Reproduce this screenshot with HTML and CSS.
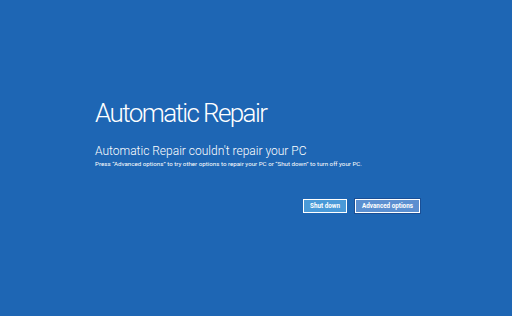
FILE: index.html
```html
<!DOCTYPE html>
<html lang="en">
<head>
    <meta charset="UTF-8">
    <title>Automatic Repair</title>
    <link rel="stylesheet" href="styles.css">
</head>
<body>
    <div class="screen">
        <h1>Automatic Repair</h1>
        <h2>Automatic Repair couldn't repair your PC</h2>
        <p class="hint">Press “Advanced options” to try other options to repair your PC or “Shut down” to turn off your PC.</p>
        <div class="actions">
            <button class="btn btn-shutdown">Shut down</button>
            <button class="btn btn-advanced">Advanced options</button>
        </div>
    </div>
</body>
</html>
```

FILE: styles.css
```css
* {
    box-sizing: border-box;
    margin: 0;
    padding: 0;
}

body {
    width: 512px;
    height: 316px;
    background-color: #1e66b4;
    color: #ffffff;
    font-family: Roboto, 'Open Sans', sans-serif;
    overflow: hidden;
}

.screen {
    padding: 96px 0 0 95px;
    width: 420px;
}

h1 {
    font-size: 26px;
    font-weight: 300;
    line-height: 34px;
    letter-spacing: -1.6px;
}

h2 {
    margin-top: 13px;
    font-size: 12px;
    font-weight: 300;
    line-height: 16px;
}

.hint {
    margin-top: 1px;
    font-size: 6.2px;
    line-height: 8px;
}

.actions {
    display: flex;
    justify-content: flex-end;
    gap: 8px;
    margin-top: 31px;
}

.btn {
    height: 14px;
    border: 1px solid #ffffff;
    color: #ffffff;
    font-family: Roboto, 'Open Sans', sans-serif;
    font-size: 6.3px;
    font-weight: 700;
    padding: 0;
    white-space: nowrap;
}

.btn-shutdown {
    width: 44px;
    background-color: #4a9ad8;
}

.btn-advanced {
    width: 65px;
    background-color: #5b8fd0;
    outline: 1px solid #1a4f96;
}
```
